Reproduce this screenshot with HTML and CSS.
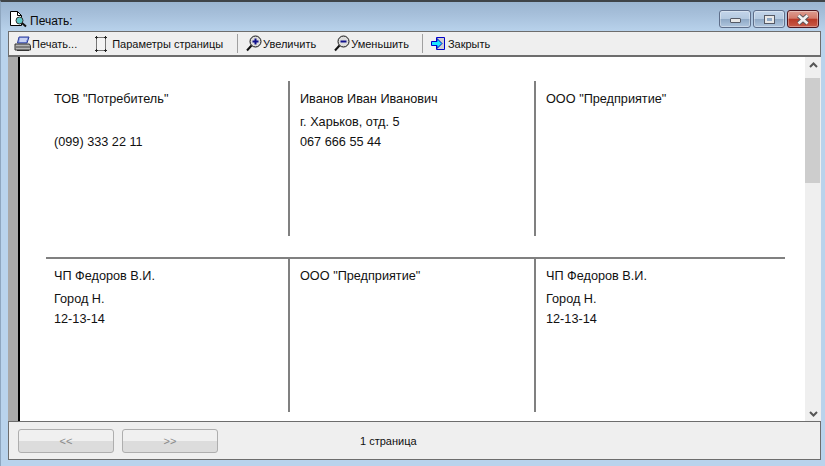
FILE: index.html
```html
<!DOCTYPE html>
<html lang="ru">
<head>
<meta charset="utf-8">
<title>Печать</title>
<link rel="stylesheet" href="styles.css">
</head>
<body>
<div class="window">
  <header class="titlebar">
    <svg class="title-icon" width="18" height="17" viewBox="0 0 18 17">
      <path d="M1.5 0.5H8.5L12.5 4.5V14.5H1.5Z" fill="#fff" stroke="#000"/>
      <path d="M8.5 0.5V4.5H12.5" fill="none" stroke="#000"/>
      <circle cx="10.5" cy="9.5" r="3.5" fill="#5ec8c8" stroke="#333"/>
      <path d="M13 12L17 15.5" stroke="#111" stroke-width="2"/>
    </svg>
    <span class="title-text">Печать:</span>
    <div class="caption-buttons">
      <div class="cap cap-min"><span class="min-glyph"></span></div>
      <div class="cap cap-max"><span class="max-glyph"></span></div>
      <div class="cap cap-close">
        <svg width="14" height="11" viewBox="0 0 14 11"><path d="M2.5 1.5L11.5 9.5M11.5 1.5L2.5 9.5" stroke="#55565c" stroke-width="4.4"/><path d="M2.5 1.5L11.5 9.5M11.5 1.5L2.5 9.5" stroke="#f2f2f2" stroke-width="2.6"/></svg>
      </div>
    </div>
  </header>
  <nav class="toolbar">
    <div class="tool tool-print">
      <svg width="18" height="16" viewBox="0 0 18 16">
        <path d="M5 1H15L13 7H3.5Z" fill="#8fa3e8" stroke="#2a3a9a"/>
        <path d="M6 3H13M5.5 5H12" stroke="#fff"/>
        <path d="M1 8H15.5L16.5 10V14H1Z" fill="#b5b5b5" stroke="#333"/>
        <path d="M2 11H16" stroke="#444"/>
        <path d="M3 14.5H15" stroke="#333"/>
      </svg>
      <span>Печать...</span>
    </div>
    <div class="tool tool-setup">
      <svg width="14" height="16" viewBox="0 0 14 16">
        <rect x="2.5" y="1.5" width="9" height="13" fill="#f4f4f4" stroke="#777"/>
        <path d="M1 1.5H4M2.5 0V3M10 1.5H13M11.5 0V3M1 14.5H4M2.5 13V16M10 14.5H13M11.5 13V16" stroke="#222" fill="none"/>
      </svg>
      <span>Параметры страницы</span>
    </div>
    <div class="sep sep-a"></div>
    <div class="tool tool-in">
      <svg width="17" height="17" viewBox="0 0 17 17">
        <circle cx="9.5" cy="6.5" r="5.5" fill="#ddd" stroke="#111"/>
        <path d="M5.5 10.5L1 15.5" stroke="#111" stroke-width="2"/>
        <path d="M6.5 6.5H12.5M9.5 3.5V9.5" stroke="#10108c" stroke-width="2"/>
      </svg>
      <span>Увеличить</span>
    </div>
    <div class="tool tool-out">
      <svg width="17" height="17" viewBox="0 0 17 17">
        <circle cx="9.5" cy="6.5" r="5.5" fill="#ddd" stroke="#111"/>
        <path d="M5.5 10.5L1 15.5" stroke="#111" stroke-width="2"/>
        <path d="M6.5 6.5H12.5" stroke="#10108c" stroke-width="2"/>
      </svg>
      <span>Уменьшить</span>
    </div>
    <div class="sep sep-b"></div>
    <div class="tool tool-close">
      <svg width="15" height="15" viewBox="0 0 15 15">
        <path d="M5.5 1.5H13.5V13.5H5.5Z" fill="#d0d0d0" stroke="#0000c8"/>
        <path d="M0.5 5.5H6V2.5L11 7.5L6 12.5V9.5H0.5Z" fill="#19e6ff" stroke="#0000c8"/>
      </svg>
      <span>Закрыть</span>
    </div>
  </nav>
  <main class="preview">
    <div class="strip"></div>
    <div class="page">
      <div class="sheet">
        <section class="row row-top">
          <div class="cell"><p>ТОВ "Потребитель"</p><p>&nbsp;</p><p>(099) 333 22 11</p></div>
          <div class="cell"><p>Иванов Иван Иванович</p><p>г. Харьков, отд. 5</p><p>067 666 55 44</p></div>
          <div class="cell cell-last"><p>ООО "Предприятие"</p></div>
        </section>
        <section class="row row-bottom">
          <div class="cell"><p>ЧП Федоров В.И.</p><p>Город Н.</p><p>12-13-14</p></div>
          <div class="cell"><p>ООО "Предприятие"</p></div>
          <div class="cell cell-last"><p>ЧП Федоров В.И.</p><p>Город Н.</p><p>12-13-14</p></div>
        </section>
      </div>
    </div>
    <div class="scrollbar">
      <svg class="arrow arrow-up" width="9" height="6" viewBox="0 0 9 6"><path d="M1 5L4.5 1.5L8 5" fill="none" stroke="#555" stroke-width="2"/></svg>
      <div class="thumb"></div>
      <svg class="arrow arrow-down" width="9" height="6" viewBox="0 0 9 6"><path d="M1 1L4.5 4.5L8 1" fill="none" stroke="#555" stroke-width="2"/></svg>
    </div>
  </main>
  <footer class="statusbar">
    <button class="nav-btn" type="button" disabled>&lt;&lt;</button>
    <button class="nav-btn" type="button" disabled>&gt;&gt;</button>
    <span class="pages">1 страница</span>
  </footer>
</div>
</body>
</html>
```
FILE: styles.css
```css
* { box-sizing: border-box; }
html, body { margin: 0; padding: 0; }
body {
  width: 825px;
  height: 466px;
  overflow: hidden;
  font-family: "Liberation Sans", Arial, sans-serif;
  font-size: 12px;
  color: #111;
}
p { margin: 0; }
.window {
  width: 825px;
  height: 466px;
  display: flex;
  flex-direction: column;
  padding: 0 4px 6px 7px;
  border-top: 2px solid #3f4448;
  border-left: 1px solid #8ea6bf;
  background: linear-gradient(180deg, #9bb5d0 0, #a6bfda 12px, #b9d3ec 30px, #b9d3ec 100%);
}
.titlebar {
  height: 29px;
  flex: none;
  display: flex;
  align-items: flex-start;
}
.title-icon { margin: 9px 0 0 1px; flex: none; }
.title-text { margin: 12px 0 0 3px; color: #0a0a0a; }
.caption-buttons {
  margin-left: auto;
  display: flex;
  gap: 2px;
  padding-top: 8px;
  margin-right: 2px;
}
.cap {
  width: 32px;
  height: 18px;
  border: 1px solid #5e6e8a;
  border-radius: 3px;
  display: flex;
  align-items: center;
  justify-content: center;
  background: linear-gradient(180deg, #c3d5ea 0, #b4c9e0 48%, #8fa9c6 52%, #b0c6de 100%);
  box-shadow: inset 0 0 0 1px rgba(255,255,255,.35);
}
.cap-close {
  border-color: #4d1620;
  background: linear-gradient(180deg, #dc9c90 0, #d47a6a 45%, #b83a28 52%, #c85a48 100%);
}
.min-glyph {
  display: block;
  width: 11px;
  height: 5px;
  margin-top: 3px;
  background: #e8e8e8;
  border: 1px solid #555a66;
  border-radius: 1px;
}
.max-glyph {
  display: block;
  width: 9px;
  height: 7px;
  background: #8fa9c6;
  border: 2px solid #e8e8e8;
  outline: 1px solid #555a66;
}
.toolbar {
  height: 26px;
  flex: none;
  display: flex;
  align-items: center;
  background: #efefef;
  border: 1px solid #6d6d6d;
  border-bottom: 2px solid #6d6d6d;
  padding-left: 5px;
  font-size: 11px;
  color: #111;
}
.tool { display: flex; align-items: center; }
.tool svg { flex: none; }
.tool-setup { margin-left: 17px; }
.tool-setup span { margin-left: 4px; }
.sep { width: 1px; height: 19px; background: #a0a0a0; flex: none; }
.sep-a { margin-left: 14px; }
.tool-in { margin-left: 8px; }
.tool-out { margin-left: 18px; }
.sep-b { margin-left: 13px; }
.tool-close { margin-left: 8px; }
.tool-close span { margin-left: 2px; }
.preview {
  flex: 1;
  min-height: 0;
  display: flex;
}
.strip {
  width: 10px;
  flex: none;
  background: #a9a9a9;
}
.page {
  flex: 1;
  background: #fff;
  border-left: 2px solid #000;
  padding: 24px 20px 0 26px;
  overflow: hidden;
}
.row { display: grid; grid-template-columns: 244px 246px 1fr; }
.row-top { height: 178px; border-bottom: 2px solid #808080; }
.row-bottom { height: 155px; }
.row-top .cell { height: 155px; padding-top: 8px; }
.row-bottom .cell { height: 153px; padding-top: 7px; }
.cell {
  border-right: 2px solid #808080;
  padding-left: 10px;
  font-size: 12.7px;
  line-height: 20px;
}
.cell:first-child { padding-left: 8px; }
.cell p:first-child { margin-bottom: 3px; }
.cell-last { border-right: 0; }
.scrollbar {
  width: 16px;
  flex: none;
  background: #efefef;
  display: flex;
  flex-direction: column;
  align-items: center;
  padding-bottom: 4px;
}
.arrow { flex: none; }
.arrow-up { margin-top: 5px; }
.thumb { width: 15px; height: 105px; margin: 10px 1px 0 0; background: #cdcdcd; }
.arrow-down { margin-top: auto; }
.statusbar {
  height: 39px;
  flex: none;
  display: flex;
  align-items: center;
  background: #efefef;
  border: 1px solid #6d6d6d;
  padding-left: 9px;
  gap: 8px;
}
.nav-btn {
  width: 96px;
  height: 24px;
  margin-top: 1px;
  padding: 0;
  border: 1px solid #aeaeae;
  border-radius: 3px;
  background: linear-gradient(180deg, #f0f0f0 0, #f0f0f0 50%, #dcdcdc 50%, #dcdcdc 100%);
  color: #8a8a8a;
  font: 11px "Liberation Sans", Arial, sans-serif;
}
.pages { margin-left: 134px; font-size: 11px; color: #111; }
```
